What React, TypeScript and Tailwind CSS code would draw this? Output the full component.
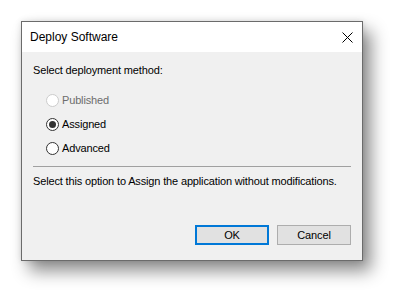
import React from "react";

function Radio({ label, checked, disabled }: { label: string; checked?: boolean; disabled?: boolean }) {
  return (
    <div className="flex h-[24px] items-center pl-[13px]">
      <div
        className={
          "flex h-[13px] w-[13px] items-center justify-center rounded-full border bg-white " +
          (disabled ? "border-[#cccccc]" : "border-[#333333]")
        }
      >
        {checked && <div className="h-[7px] w-[7px] rounded-full bg-[#333333]" />}
      </div>
      <span className={"ml-[3px] leading-[13px] " + (disabled ? "text-[#6d6d6d]" : "text-black")}>{label}</span>
    </div>
  );
}

export default function App() {
  return (
    <div className="h-[303px] w-[406px] bg-white pl-[21px] pt-[21px]" style={{ fontFamily: '"Liberation Sans", Arial, sans-serif' }}>
      <div className="flex h-[240px] w-[342px] flex-col border border-[#6b6b6b] bg-[#f0f0f0] text-[11px] tracking-[-0.15px] shadow-[8px_10px_16px_rgba(0,0,0,0.45),0_0_6px_rgba(0,0,0,0.12)]">
        <div className="flex h-[30px] items-center justify-between bg-white pl-[8px] pr-[9px]">
          <span className="text-[12px] leading-[14px] tracking-normal text-black">
            Deploy Software
          </span>
          <svg width="11" height="11" viewBox="0 0 11 11" className="mt-[1px]">
            <path d="M0.5 0.5 L10.5 10.5 M10.5 0.5 L0.5 10.5" stroke="#000" strokeWidth="1" />
          </svg>
        </div>
        <div className="flex flex-1 flex-col px-[11px]">
          <div className="mt-[11px] h-[14px] leading-[14px] text-black">Select deployment method:</div>
          <div className="mt-[11px] flex flex-col">
            <Radio label="Published" disabled />
            <Radio label="Assigned" checked />
            <Radio label="Advanced" />
          </div>
          <div className="mt-[6px] h-px bg-[#a0a0a0]" />
          <div className="mt-[7px] h-[14px] leading-[14px] text-black">
            Select this option to Assign the application without modifications.
          </div>
          <div className="mt-[37px] flex justify-end gap-[8px] pr-[0px]">
            <button className="flex h-[20px] w-[74px] items-center justify-center border-2 border-[#0078d7] bg-[#e1e1e1] text-[11px] text-black">
              OK
            </button>
            <button className="flex h-[20px] w-[74px] items-center justify-center border border-[#adadad] bg-[#e1e1e1] text-[11px] text-black">
              Cancel
            </button>
          </div>
        </div>
      </div>
    </div>
  );
}
